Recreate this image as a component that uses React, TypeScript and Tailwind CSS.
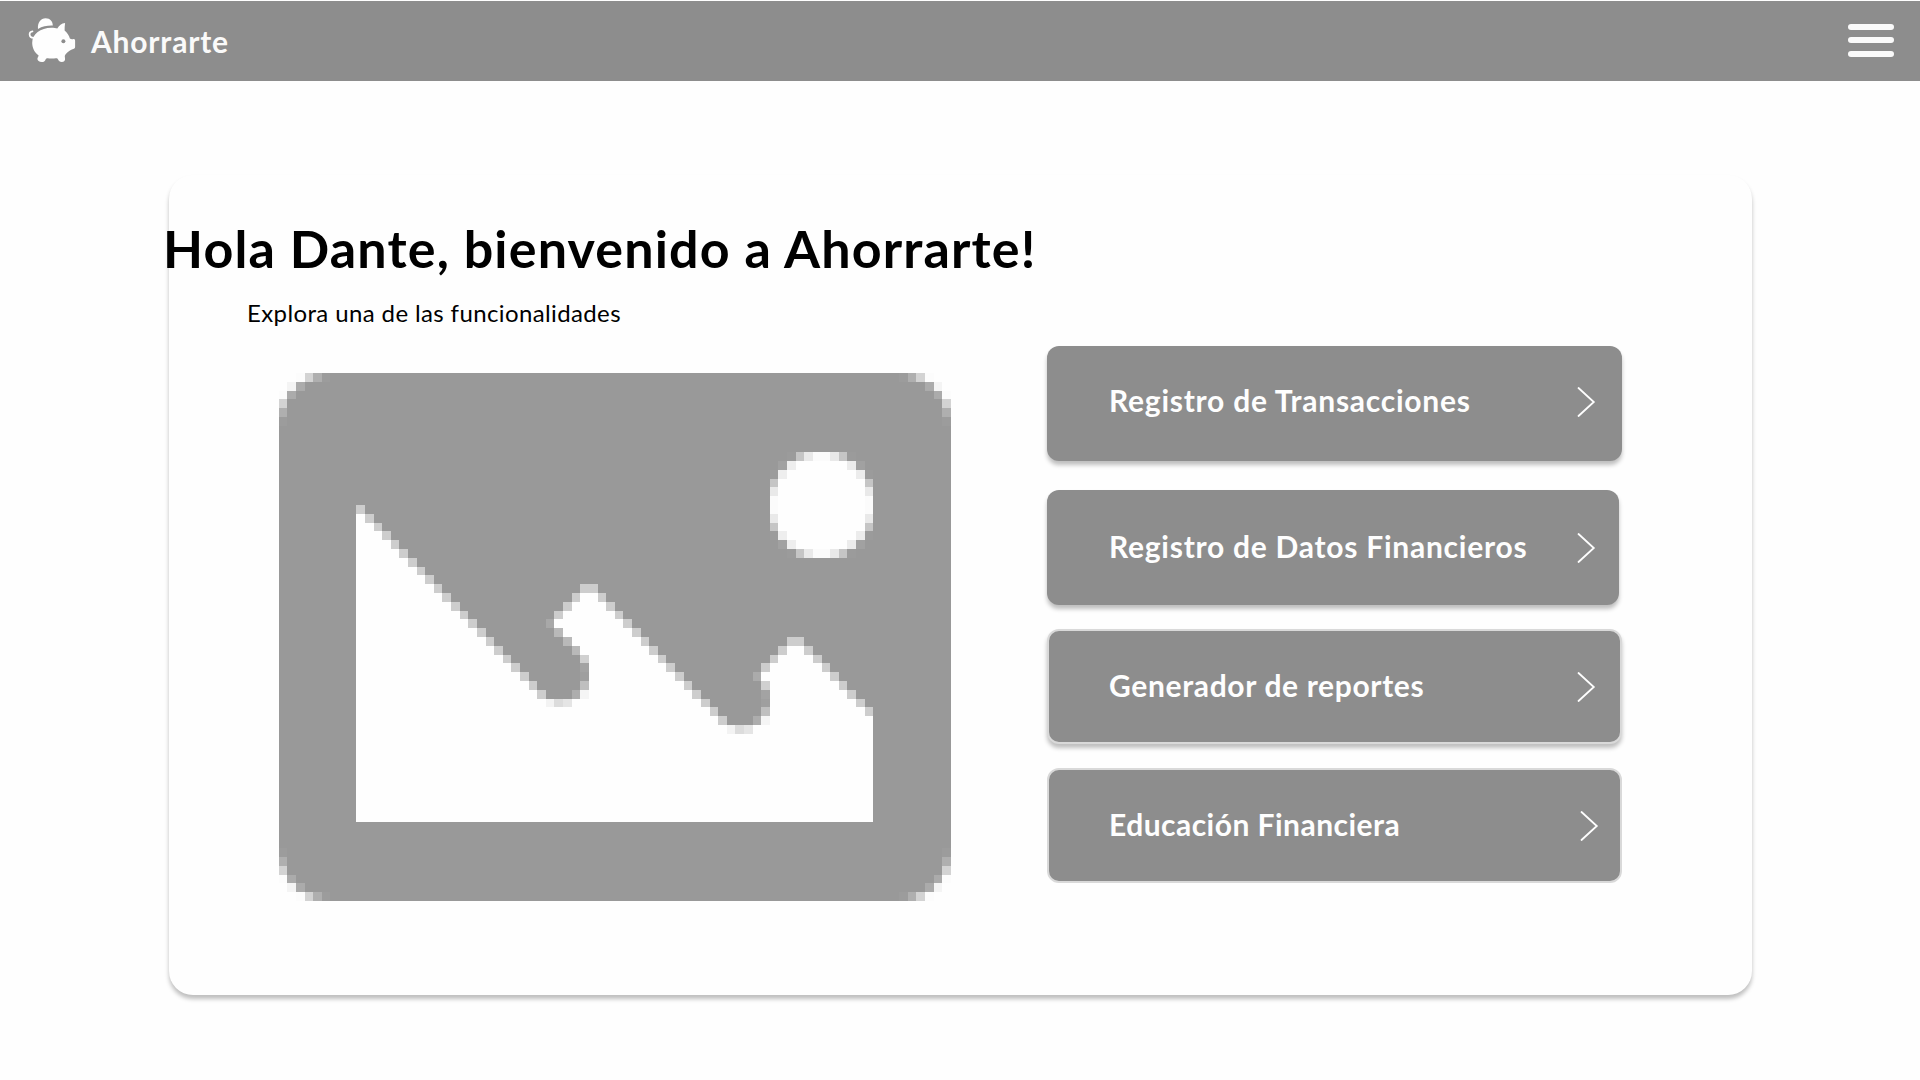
import type { ReactElement } from 'react';

const LATO = "font-['Lato','Nunito',sans-serif]";

function PiggyIcon() {
  return (
    <svg width="50" height="46" viewBox="27 17 50 46" fill="#fefefe">
      <path d="M38 28.9 C37.4 22.5 40.8 18.2 45.6 18.2 C50.2 18.2 52.9 21.5 52.8 25.6 C47.5 25.4 42.500 26.400 38 28.900 Z" />
      <path d="M51.500 27.700 C54 27.700 55.700 28 57.300 28.500 C59 25.300 61.500 23.300 65.100 22.900 C64.800 25.500 64.500 28 64.600 30.600 C67.300 32.800 69 35.500 69.900 38.500 C71 39.400 72.300 39.400 73.500 39 C74.600 38.800 75.100 39.600 75.100 40.500 L75.100 46.800 C75.100 48.200 74.400 48.800 73.200 49 C70.500 49.500 68.500 51.500 66.300 53.600 C64.500 55.200 64.700 56.500 65 58 C65.400 60.500 64.200 62 61.700 62 C59.800 62 58.700 61 58.100 59.600 C57.600 58.400 57 58 55.800 58.200 C53.200 58.700 50.200 58.700 47.800 58.200 C46.600 58 46 58.500 45.500 59.700 C44.900 61.200 43.700 62 41.800 62 C39.200 62 37.300 60.800 37.400 58.800 C37.500 57.500 38.800 56.500 38.500 55.300 C34.800 52.600 32.300 48.500 32.200 43 C32.100 34 40.500 27.700 51.500 27.700 Z" />
      <path
        d="M33.500 37.800 C28.500 37.700 28.500 31.500 32.500 31.300"
        fill="none"
        stroke="#fefefe"
        strokeWidth="1.7"
        strokeLinecap="round"
      />
      <circle cx="63.400" cy="41.200" r="2" fill="#8d8d8d" />
    </svg>
  );
}

function Chevron() {
  return (
    <svg width="19" height="32" viewBox="0 0 19 32" fill="none" className="mt-[40px] shrink-0">
      <path d="M1.500 2 L16.800 16 L1.500 30" stroke="#fefefe" strokeWidth="1.800" strokeLinecap="round" />
    </svg>
  );
}

/* Placeholder picture on a 78 x 60 grid of cells: [row, column, width, colour]. */
type Cell = [number, number, number, string];
const W = '#fefefe';

function landscapeCells(): Cell[] {
  const cells: Cell[] = [];

  const corner: Cell[] = [
    [0, 0, 2, W], [0, 2, 1, '#fcfcfc'], [0, 3, 1, '#d3d3d3'], [0, 4, 1, '#afafaf'], [0, 5, 1, '#9c9c9c'],
    [1, 0, 1, W], [1, 1, 1, '#f4f4f4'], [1, 2, 1, '#ababab'],
    [2, 0, 1, '#fcfcfc'], [2, 1, 1, '#ababab'],
    [3, 0, 1, '#d3d3d3'], [4, 0, 1, '#afafaf'], [5, 0, 1, '#9c9c9c'],
  ];
  corner.forEach(([r, c, w, f]) => {
    cells.push([r, c, w, f], [r, 78 - c - w, w, f], [59 - r, c, w, f], [59 - r, 78 - c - w, w, f]);
  });

  const sun: [number, number, string][][] = [
    [[2, 1, '#9b9b9b'], [3, 1, '#c5c5c5'], [4, 1, '#e9e9e9'], [5, 2, '#fbfbfb'], [7, 1, '#e9e9e9'], [8, 1, '#c5c5c5'], [9, 1, '#9b9b9b']],
    [[1, 1, '#a1a1a1'], [2, 1, '#eeeeee'], [3, 6, W], [9, 1, '#ececec'], [10, 1, '#a1a1a1']],
    [[0, 1, '#9b9b9b'], [1, 1, '#eeeeee'], [2, 8, W], [10, 1, '#ececec'], [11, 1, '#9b9b9b']],
    [[0, 1, '#c5c5c5'], [1, 10, W], [11, 1, '#c5c5c5']],
    [[0, 1, '#e9e9e9'], [1, 10, W], [11, 1, '#e9e9e9']],
    [[0, 1, '#fbfbfb'], [1, 10, W], [11, 1, '#fbfbfb']],
  ];
  sun.forEach((row, i) =>
    row.forEach(([c, w, f]) => {
      cells.push([9 + i, 57 + c, w, f], [20 - i, 57 + c, w, f]);
    }),
  );

  // Open area below the ridges, then the three slopes.
  const edge = '#cdcdcd';
  for (let r = 15; r <= 36; r++) {
    const end = Math.min(r - 6, 30);
    if (end > 9) cells.push([r, 9, end - 9, W]);
    cells.push([r, end, 1, edge]);
  }
  const second: Record<number, number> = { 24: 36, 25: 35, 26: 34, 27: 33, 28: 32, 29: 33, 30: 34, 31: 35, 32: 36, 33: 36, 34: 36, 35: 36, 36: 36 };
  Object.entries(second).forEach(([k, start]) => {
    const r = Number(k);
    if (r + 12 > start) cells.push([r, start, r + 12 - start, W]);
    cells.push([r, r + 12, 1, edge]);
  });
  cells.push(
    [24, 35, 1, edge], [25, 34, 1, edge], [26, 33, 1, edge], [27, 32, 1, edge], [28, 31, 1, '#a8a8a8'],
    [29, 32, 1, '#b9b9b9'], [30, 33, 1, '#b9b9b9'], [31, 34, 1, '#b9b9b9'], [32, 35, 1, '#d0d0d0'],
    [33, 35, 1, '#a3a3a3'], [34, 35, 1, '#9f9f9f'], [35, 35, 1, '#bfbfbf'], [36, 34, 1, '#adadad'], [36, 35, 1, '#f5f5f5'],
    [37, 9, 22, W], [37, 31, 1, '#f3f3f3'], [37, 32, 1, '#dcdcdc'], [37, 33, 1, '#e5e5e5'], [37, 34, 15, W],
    [37, 49, 1, edge], [38, 9, 41, W], [38, 50, 1, edge], [39, 9, 42, W], [39, 51, 1, edge],
    [37, 50, 2, '#999999'],
    [40, 9, 43, W], [40, 52, 1, '#f3f3f3'], [40, 53, 1, '#dcdcdc'], [40, 54, 1, '#e5e5e5'], [40, 55, 14, W],
  );
  const third: Record<number, number> = { 30: 60, 31: 59, 32: 58, 33: 57, 34: 56, 35: 57, 36: 57, 37: 57, 38: 57, 39: 57 };
  Object.entries(third).forEach(([k, start]) => {
    const r = Number(k);
    const stop = Math.min(r + 30, 69);
    if (stop > start) cells.push([r, start, stop - start, W]);
    if (r + 30 < 69) cells.push([r, r + 30, 1, edge]);
  });
  cells.push(
    [30, 59, 1, edge], [31, 58, 1, edge], [32, 57, 1, edge], [33, 56, 1, edge], [34, 55, 1, '#ababab'],
    [35, 56, 1, '#d0d0d0'], [36, 56, 1, '#a3a3a3'], [37, 56, 1, '#9f9f9f'], [38, 56, 1, '#bfbfbf'],
    [39, 55, 1, '#adadad'], [39, 56, 1, '#f5f5f5'],
  );
  for (let r = 41; r < 51; r++) cells.push([r, 9, 60, W]);
  return cells;
}

function LandscapePlaceholder() {
  const rects: ReactElement[] = landscapeCells().map(([r, c, w, f], i) => (
    <rect key={i} x={c} y={r} width={w} height={1} fill={f} />
  ));
  return (
    <svg
      viewBox="-0.03 0 78 60"
      preserveAspectRatio="none"
      shapeRendering="crispEdges"
      className="mt-[44px] ml-[110px] h-[528px] w-[672px] shrink-0"
    >
      <rect x="-0.03" width="78" height="60" fill="#999999" />
      <g transform="translate(-0.06 0)">{rects}</g>
    </svg>
  );
}

const options = [
  { label: 'Registro de Transacciones', box: 'w-[575px] border-transparent shadow-[0_4px_4px_rgba(0,0,0,0.25)]', inner: '-mt-[2px] pr-[24px]', text: 'tracking-[0.750px]' },
  { label: 'Registro de Datos Financieros', box: 'mt-[29px] w-[572px] border-transparent shadow-[0_4px_4px_rgba(0,0,0,0.25)]', inner: 'pr-[21px]', text: 'tracking-[0.740px]' },
  { label: 'Generador de reportes', box: 'mt-6 w-[575px] border-[#d9d9d9] shadow-[0_4px_4px_rgba(0,0,0,0.25)]', inner: 'pr-[24px]', text: 'tracking-[0.650px]' },
  { label: 'Educación Financiera', box: 'mt-6 w-[575px] border-[#d9d9d9]', inner: 'pr-[21px]', text: 'tracking-[0.470px]' },
];

export default function App() {
  return (
    <div className={`${LATO} flex h-[1080px] w-[1920px] flex-col overflow-hidden bg-[#fefefe]`}>
      <header className="flex h-[81px] shrink-0 items-center justify-between border-t border-[#fefefe] bg-[#8d8d8d] pr-[26px] pl-[27px]">
        <div className="flex items-center pb-[2px]">
          <PiggyIcon />
          <span className="mt-px ml-[14px] text-[30px] leading-9 font-bold tracking-[0.800px] text-[#fafafa]">Ahorrarte</span>
        </div>
        <button className="flex w-[46px] flex-col pb-px" aria-label="Menú">
          <span className="h-[6px] rounded-full bg-[#fafafa]" />
          <span className="mt-[7px] h-[6px] rounded-full bg-[#fafafa]" />
          <span className="mt-[8px] h-[6px] rounded-full bg-[#fafafa]" />
        </button>
      </header>

      <main className="mt-[94px] ml-[169px] flex h-[820px] w-[1583px] flex-col rounded-[24px] bg-[#fefefe] shadow-[0_4px_4px_rgba(0,0,0,0.25)]">
        <h1 className="mt-[43px] -ml-[6px] text-[52px] leading-[60px] font-bold tracking-[1.140px] whitespace-nowrap text-black">
          Hola Dante, bienvenido a Ahorrarte!
        </h1>
        <p className="mt-[19px] ml-[78px] text-[24px] leading-8 tracking-[0.380px] text-black">Explora una de las funcionalidades</p>
        <div className="flex items-start">
          <LandscapePlaceholder />
          <nav className="mt-[17px] ml-24 flex flex-col">
            {options.map((o) => (
              <button key={o.label} className={`${o.box} flex h-[115px] flex-col rounded-xl border-2 bg-[#8d8d8d] text-left`}>
                <span className={`${o.inner} flex w-full items-start justify-between pl-[60px]`}>
                  <span className={`${o.text} mt-[36px] text-[30px] leading-9 font-bold whitespace-nowrap text-[#fefefe]`}>{o.label}</span>
                  <Chevron />
                </span>
              </button>
            ))}
          </nav>
        </div>
      </main>
    </div>
  );
}
